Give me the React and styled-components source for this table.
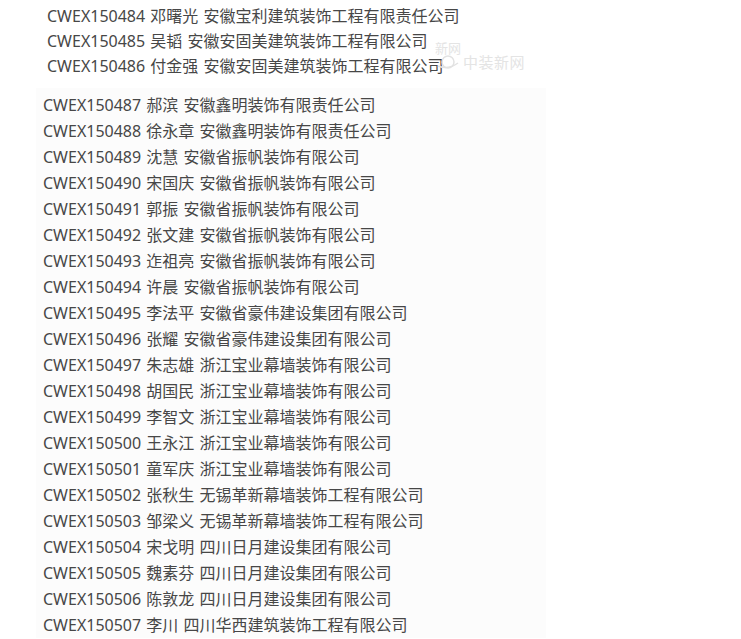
import React from "react";
import styled, { createGlobalStyle } from "styled-components";

const Global = createGlobalStyle`
  html, body { margin: 0; padding: 0; background: #ffffff; }
  body {
    font-family: "Noto Sans", "Noto Sans CJK SC", sans-serif;
    font-size: 16px;
    color: #474747;
  }
`;

const Page = styled.div`
  position: relative;
  width: 741px;
  height: 639px;
  overflow: hidden;
  background: #ffffff;
`;

const TopBlock = styled.div`
  display: flex;
  flex-direction: column;
  padding: 4px 0 0 47px;
`;

const LowerBlock = styled.div`
  display: flex;
  flex-direction: column;
  margin: 9px 0 0 36px;
  padding: 4px 0 0 7px;
  width: 503px;
  background: #fcfcfc;
`;

const Row = styled.div`
  line-height: ${(p) => p.$lh}px;
  height: ${(p) => p.$lh}px;
  white-space: nowrap;
  word-spacing: 1px;
`;

const Watermark = styled.div`
  position: absolute;
  left: 433px;
  top: 40px;
  width: 100px;
  height: 32px;
  pointer-events: none;
  color: #e4e4e4;
  font-family: "Noto Sans CJK SC", sans-serif;
`;

const WmSmall = styled.span`
  position: absolute;
  left: 2px;
  top: 0;
  font-size: 13px;
  line-height: 16px;
`;

const WmBig = styled.span`
  position: absolute;
  left: 30px;
  top: 13px;
  font-size: 15px;
  line-height: 18px;
  letter-spacing: 0.5px;
`;

const WmLogo = styled.svg`
  position: absolute;
  left: 4px;
  top: 14px;
`;

const top = [
  "CWEX150484 邓曙光 安徽宝利建筑装饰工程有限责任公司",
  "CWEX150485 吴韬 安徽安固美建筑装饰工程有限公司",
  "CWEX150486 付金强 安徽安固美建筑装饰工程有限公司",
];

const lower = [
  "CWEX150487 郝滨 安徽鑫明装饰有限责任公司",
  "CWEX150488 徐永章 安徽鑫明装饰有限责任公司",
  "CWEX150489 沈慧 安徽省振帆装饰有限公司",
  "CWEX150490 宋国庆 安徽省振帆装饰有限公司",
  "CWEX150491 郭振 安徽省振帆装饰有限公司",
  "CWEX150492 张文建 安徽省振帆装饰有限公司",
  "CWEX150493 迮祖亮 安徽省振帆装饰有限公司",
  "CWEX150494 许晨 安徽省振帆装饰有限公司",
  "CWEX150495 李法平 安徽省豪伟建设集团有限公司",
  "CWEX150496 张耀 安徽省豪伟建设集团有限公司",
  "CWEX150497 朱志雄 浙江宝业幕墙装饰有限公司",
  "CWEX150498 胡国民 浙江宝业幕墙装饰有限公司",
  "CWEX150499 李智文 浙江宝业幕墙装饰有限公司",
  "CWEX150500 王永江 浙江宝业幕墙装饰有限公司",
  "CWEX150501 童军庆 浙江宝业幕墙装饰有限公司",
  "CWEX150502 张秋生 无锡革新幕墙装饰工程有限公司",
  "CWEX150503 邹梁义 无锡革新幕墙装饰工程有限公司",
  "CWEX150504 宋戈明 四川日月建设集团有限公司",
  "CWEX150505 魏素芬 四川日月建设集团有限公司",
  "CWEX150506 陈敦龙 四川日月建设集团有限公司",
  "CWEX150507 李川 四川华西建筑装饰工程有限公司",
];

export default function App() {
  return (
    <Page>
      <Global />
      <TopBlock>
        {top.map((t) => (
          <Row key={t} $lh={25}>{t}</Row>
        ))}
      </TopBlock>
      <LowerBlock>
        {lower.map((t) => (
          <Row key={t} $lh={26}>{t}</Row>
        ))}
      </LowerBlock>
      <Watermark>
        <WmSmall>新网</WmSmall>
        <WmLogo width="22" height="16" viewBox="0 0 22 16">
          <circle cx="11" cy="8" r="6" fill="none" stroke="#e2e2e2" strokeWidth="1.5" />
          <path d="M1 12 Q 11 16 21 9" fill="none" stroke="#e2e2e2" strokeWidth="1.5" />
        </WmLogo>
        <WmBig>中装新网</WmBig>
      </Watermark>
    </Page>
  );
}
